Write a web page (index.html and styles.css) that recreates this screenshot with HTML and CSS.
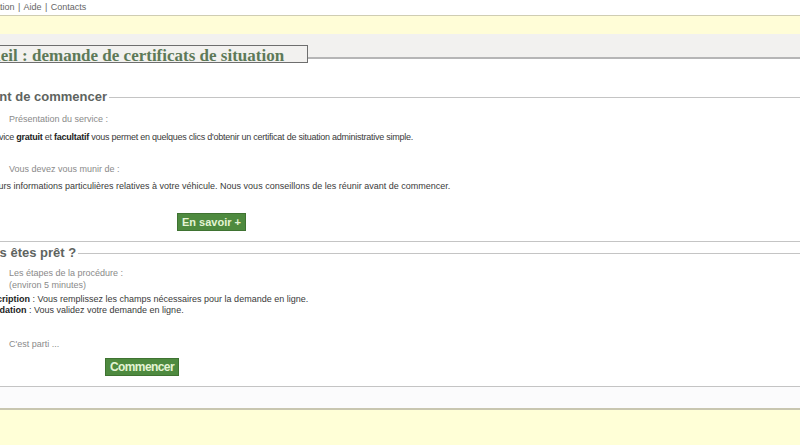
FILE: index.html
```html
<!DOCTYPE html>
<html lang="fr">
<head>
    <meta charset="UTF-8">
    <meta name="viewport" content="width=device-width, initial-scale=1.0">
    <title>Accueil : demande de certificats de situation</title>
    <link rel="stylesheet" href="styles.css">
</head>
<body>
    <div class="topnav">
        <a href="#">Présentation</a> | <a href="#">Aide</a> | <a href="#">Contacts</a>
    </div>
    <div class="band"></div>
    <div class="titlebar">
        <h1>Accueil : demande de certificats de situation</h1>
    </div>

    <div class="content">
        <fieldset class="step">
            <legend>Avant de commencer</legend>
            <p class="label">Présentation du service :</p>
            <p class="text first">Ce service <b>gratuit</b> et <b>facultatif</b> vous permet en quelques clics d'obtenir un certificat de situation administrative simple.</p>
            <p class="label second">Vous devez vous munir de :</p>
            <p class="text">Plusieurs informations particulières relatives à votre véhicule. Nous vous conseillons de les réunir avant de commencer.</p>
            <div class="actions more">
                <a href="#" class="btn">En savoir +</a>
            </div>
        </fieldset>

        <fieldset class="step ready">
            <legend>Vous êtes prêt ?</legend>
            <p class="label steps">Les étapes de la procédure :<br>(environ 5 minutes)</p>
            <ol class="procedure">
                <li><b>Inscription</b> : Vous remplissez les champs nécessaires pour la demande en ligne.</li>
                <li><b>Validation</b> : Vous validez votre demande en ligne.</li>
            </ol>
            <p class="label go">C'est parti ...</p>
            <div class="actions start">
                <a href="#" class="btn btn-big">Commencer</a>
            </div>
        </fieldset>
    </div>

    <div class="footer-gap"></div>
    <div class="footer"></div>
</body>
</html>
```

FILE: styles.css
```css
html, body {
    overflow: hidden;
}
body {
    margin: 0;
    font-family: "Liberation Sans", Arial, sans-serif;
    font-size: 9px;
    color: #3a3a3a;
    background: #fff;
}
a {
    color: inherit;
    text-decoration: none;
}

/* header */
.topnav {
    height: 15px;
    line-height: 14px;
    margin-left: -36px;
    color: #666;
    white-space: nowrap;
    word-spacing: 1px;
}
.band {
    height: 18px;
    border-top: 1px solid #cfcdb3;
    background: #fffdd7;
}
.titlebar {
    display: flex;
    align-items: flex-start;
    padding-top: 12px;
    background: #f2f1ef;
    border-bottom: 2px solid #b6b6b6;
}
.titlebar h1 {
    margin: -1px 0 -6px -40px;
    padding: 0 23px 0 3px;
    height: 16px;
    line-height: 16px;
    border: 1px solid #6e6e6e;
    background: #f2f1ef;
    font: bold 17px "Liberation Serif", "Times New Roman", serif;
    color: #5d7958;
    white-space: nowrap;
}

/* steps */
.content {
    margin: 30px -10px 0 -40px;
}
.step {
    margin: 0;
    padding: 0 0 10px 14px;
    border: 0;
    border-top: 1px solid #c4c4c4;
    border-bottom: 1px solid #c4c4c4;
    min-width: 0;
}
.step.ready {
    margin-top: 3px;
}
.step legend {
    padding: 0 2px;
    font: bold 13px/16px "Liberation Sans", Arial, sans-serif;
    color: #5e645f;
}
.step p {
    margin: 0;
    line-height: 12px;
    white-space: nowrap;
}
.label {
    padding-left: 35px;
    color: #8a8a8a;
}
.step .label {
    margin-top: 8px;
}
.step .text.first {
    margin-top: 6px;
    letter-spacing: -0.25px;
}
.step .label.second {
    margin-top: 20px;
}
.step .text {
    margin-top: 5px;
}
.step .label.steps {
    margin-top: 6px;
}
.step .label.go {
    margin-top: 22px;
}
.text b, .procedure b {
    color: #222;
}
.procedure {
    margin: 3px 0 0;
    padding: 0;
    list-style: decimal inside;
    line-height: 11px;
    white-space: nowrap;
}

/* buttons */
.actions {
    display: flex;
    height: 18px;
    margin-top: 21px;
}
.actions.more {
    padding-left: 203px;
}
.actions.start {
    margin-top: 8px;
    padding-left: 131px;
}
.btn {
    display: flex;
    align-items: center;
    padding: 0 4px;
    background: #4e8a3f;
    border: 1px solid #3f7332;
    color: #e4f4d4;
    font-weight: bold;
    font-size: 11px;
}
.btn-big {
    font-size: 12px;
    letter-spacing: -0.6px;
    padding: 0 4px;
}

/* footer */
.footer-gap {
    height: 21px;
    background: #fbfbfc;
}
.footer {
    height: 40px;
    border-top: 2px solid #c8c6b0;
    background: #ffffd7;
}
```
